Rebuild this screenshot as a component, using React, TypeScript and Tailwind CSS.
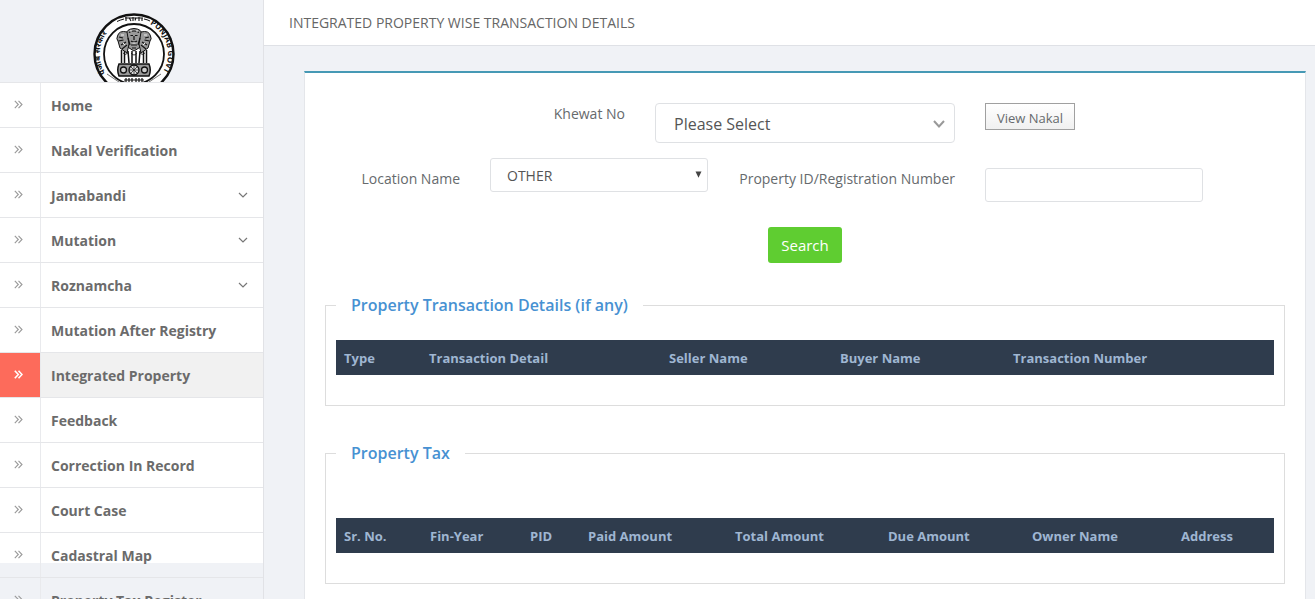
import { useState } from "react";

const menu = [
  { label: "Home" },
  { label: "Nakal Verification" },
  { label: "Jamabandi", children: true },
  { label: "Mutation", children: true },
  { label: "Roznamcha", children: true },
  { label: "Mutation After Registry" },
  { label: "Integrated Property", active: true },
  { label: "Feedback" },
  { label: "Correction In Record" },
  { label: "Court Case" },
  { label: "Cadastral Map" },
  { label: "Property Tax Register" },
];

const transactionColumns = [
  { label: "Type", width: "w-[85px]" },
  { label: "Transaction Detail", width: "w-[240px]" },
  { label: "Seller Name", width: "w-[171px]" },
  { label: "Buyer Name", width: "w-[173px]" },
  { label: "Transaction Number", width: "w-[269px]" },
];

const taxColumns = [
  { label: "Sr. No.", width: "w-[86px]" },
  { label: "Fin-Year", width: "w-[100px]" },
  { label: "PID", width: "w-[58px]" },
  { label: "Paid Amount", width: "w-[147px]" },
  { label: "Total Amount", width: "w-[153px]" },
  { label: "Due Amount", width: "w-[144px]" },
  { label: "Owner Name", width: "w-[149px]" },
  { label: "Address", width: "w-[101px]" },
];

function Emblem() {
  return (
    <svg className="h-[82px] w-[82px] shrink-0" viewBox="0 0 82 82" fill="none" stroke="#111">
      <defs>
        <path id="ring-left" d="M12.700 60 A34 34 0 0 1 27 10" />
        <path id="ring-right" d="M57 11 A34 34 0 0 1 66 64" />
      </defs>
      <circle cx="41" cy="41" r="39.500" fill="#fdfdfd" strokeWidth="2.400" />
      <circle cx="41" cy="41" r="30" fill="#fff" strokeWidth="1.800" />
      <g fill="#111" stroke="none" className="font-['Noto_Sans'] text-[8px] font-bold">
        <text><textPath href="#ring-left">पंजाब सरकार</textPath></text>
        <text><textPath href="#ring-right">PUNJAB GOVT</textPath></text>
      </g>
      <path d="M24 8.500 q3-1.500 7-2.500 M51 6 q3 .5 6 2" strokeWidth="1" />
      <path d="M32 5 h18 M33 4 v4 M36 4.500 l2 3.500 M40 4 v4 M43 4.500 l-1 3 M46 4 v4 M49 5 v3" strokeWidth="1.100" />

      {/* Lion heads and manes */}
      <g strokeWidth="1" fill="#999">
        <path d="M33 22 q0-6 8-6.500 q8 .5 8 6.500 l0 11 -8 5 -8-5z" />
        <path d="M34 19 q-8-2-9.500 4 q-1.500 3 .5 5 l2 7 7 5 2-9z" />
        <path d="M48 19 q8-2 9.500 4 q1.500 3-.5 5 l-2 7 -7 5-2-9z" />
      </g>
      <path d="M36 19.500 q5-3 10 0 M37.500 22.500 h2.500 M42 22.500 h2.500 M41 23 v4 M38 28 q3 2 6 0 M35 25 l2 7 M47 25 l-2 7 M38 32 h6 M39 35 h4 M26 24 l4 1 M25.500 28 l5-1 M28 32 l5-3 M29 36 l5-4 M56 24 l-4 1 M56.500 28 l-5-1 M54 32 l-5-3 M53 36 l-5-4" strokeWidth="1.200" />
      <path d="M37 18 h2 M43 18 h2 M28 22 h3 M51 22 h3 M39.500 30 h3 M30 30 l2 2 M52 30 l-2 2" stroke="#eee" strokeWidth="1" />

      {/* Chests and legs */}
      <path d="M28.500 37 v13 M31.500 38 v12 M35 38 l1 12 M39 38 v12 M43 38 v12 M47 38 l-1 12 M50.500 38 v12 M53.500 37 v13" strokeWidth="1.500" />
      <path d="M30 40 q2 3 5 0 M38 40 q3 4 6 0 M47 40 q2 3 5 0" strokeWidth=".8" />

      {/* Abacus with the wheel */}
      <path d="M26 51 h30 q2.500 6 0 12 h-30 q-2.500-6 0-12z" fill="#999" strokeWidth="1.500" />
      <circle cx="41" cy="57" r="5" fill="#ddd" strokeWidth="1.300" />
      <path d="M36 57 h10 M41 52 v10 M37.500 53.500 l7 7 M44.500 53.500 l-7 7" strokeWidth=".7" />
      <circle cx="30.500" cy="57" r="3" fill="#ccc" strokeWidth="1.300" />
      <circle cx="51.500" cy="57" r="3" fill="#ccc" strokeWidth="1.300" />
      <path d="M31 67 h20 M33 65 v4 M36 65 v4 M39 65 v4 M43 65 v4 M46 65 v4 M49 65 v4" strokeWidth="1.200" />
      <path d="M14 61 l12 8 M68 61 l-12 8" strokeWidth=".6" />
    </svg>
  );
}

function Sidebar() {
  return (
    <aside className="w-[264px] shrink-0 border-r border-[#e1e2e6]">
      <div className="flex h-[82px] justify-center overflow-hidden pt-[13px] pl-1">
        <Emblem />
      </div>

      {/* the white panel stops short of the list, which runs on past it */}
      <nav className="h-[calc(100vh-118px)] bg-white text-[14px] font-bold text-[#6b6b6b]">
        <ul>
          {menu.map((item) => (
            <li key={item.label} className="h-[45px] border-t border-[#e5e6e9]">
              <a href="#" className="flex h-full items-stretch">
                <span
                  className={
                    item.active
                      ? "flex w-[41px] items-center justify-center border-r border-[#e9eaed] bg-[#fd6b5b] pr-1 pb-[2px] text-white"
                      : "flex w-[41px] items-center justify-center border-r border-[#e9eaed] pr-1 pb-[2px] text-[#999]"
                  }
                >
                  <svg className="h-[9px] w-[9px]" viewBox="0 0 9 9" fill="none" stroke="currentColor" strokeWidth={item.active ? 1.6 : 1.1}>
                    <path d="M.8 .8 4.300 4.500 .8 8.200 M4.500 .8 8 4.500 4.500 8.200" />
                  </svg>
                </span>
                <span
                  className={
                    item.active
                      ? "flex flex-1 items-center justify-between bg-[#f1f1f1] pr-[15px] pl-[10px]"
                      : "flex flex-1 items-center justify-between pr-[15px] pl-[10px]"
                  }
                >
                  {item.label}
                  {item.children && (
                    <svg className="h-[6px] w-[10px]" viewBox="0 0 10 6" fill="none" stroke="#777" strokeWidth="1.200">
                      <path d="M1 1 5 5 9 1" />
                    </svg>
                  )}
                </span>
              </a>
            </li>
          ))}
        </ul>
      </nav>
    </aside>
  );
}

function HeaderTable({ columns }: { columns: { label: string; width: string }[] }) {
  return (
    <table className="w-full table-fixed bg-[#2f3c4d] text-left text-[13px] text-[#9fb6d2]">
      <thead>
        <tr className="h-[35px]">
          {columns.map((col) => (
            <th key={col.label} scope="col" className={`${col.width} px-2 pt-[2px] font-bold whitespace-nowrap`}>
              {col.label}
            </th>
          ))}
        </tr>
      </thead>
    </table>
  );
}

export default function App() {
  const [propertyId, setPropertyId] = useState("");

  return (
    <div className="flex h-screen overflow-hidden bg-[#f0f2f6] font-['Open_Sans','Noto_Sans',sans-serif] text-[14px] text-[#666a6d]">
      <Sidebar />

      {/* Main content */}
      <div className="flex min-w-0 flex-1 flex-col">
        <header className="flex h-[46px] shrink-0 items-center border-b border-[#dfe1e6] bg-white pl-[25px]">
          <h1 className="text-[14px] font-medium text-[#666]">INTEGRATED PROPERTY WISE TRANSACTION DETAILS</h1>
        </header>

        <main className="mt-[25px] mr-[9px] ml-10 flex-1 border-x border-t-2 border-[#e4e6ea] border-t-[#4699b5] bg-white px-5 pt-[30px]">
          <form onSubmit={(e) => e.preventDefault()}>
            <div className="grid grid-cols-12 items-start gap-x-[30px]">
              <label htmlFor="khewat" className="col-span-4 text-right leading-[22px]">
                Khewat No
              </label>
              <div className="relative col-span-4">
                <select id="khewat" className="h-10 w-full appearance-none rounded-[4px] border border-[#dfe1e4] bg-white px-[18px] pt-[2px] text-[16px] text-[#555]">
                  <option>Please Select</option>
                </select>
                <svg className="pointer-events-none absolute top-[17px] right-[10px] h-2 w-3" viewBox="0 0 12 8" fill="none" stroke="#999" strokeWidth="2">
                  <path d="M1 1 6 6.500 11 1" />
                </svg>
              </div>
              <div className="col-span-4">
                <button type="button" className="block h-[27px] border border-[#a0a0a0] bg-linear-to-b from-white to-[#f0f0f0] px-[11px] pt-[5px] text-[13px]">
                  View Nakal
                </button>
              </div>
            </div>

            <div className="mt-[15px] grid grid-cols-12 items-start gap-x-[30px]">
              <label htmlFor="location" className="col-span-2 pt-[10px] text-right leading-[22px] whitespace-nowrap">
                Location Name
              </label>
              <div className="relative col-span-3">
                <select id="location" className="h-[34px] w-full appearance-none rounded-[3px] border border-[#dfe1e4] bg-white px-4 text-[14px] text-[#555]">
                  <option>OTHER</option>
                </select>
                <svg className="pointer-events-none absolute top-[13px] right-[6px] h-[7px] w-[7px]" viewBox="0 0 7 7" fill="#444">
                  <path d="M.5 .5h6L3.500 6.800z" />
                </svg>
              </div>
              <label htmlFor="property-id" className="col-span-3 pt-[10px] text-right leading-[22px] whitespace-nowrap">
                Property ID/Registration Number
              </label>
              <div className="col-span-3 pt-[10px]">
                <input
                  id="property-id"
                  type="text"
                  value={propertyId}
                  onChange={(e) => setPropertyId(e.target.value)}
                  className="block h-[34px] w-full rounded-[3px] border border-[#dfe1e4] px-3"
                />
              </div>
            </div>

            <div className="mt-[25px] flex justify-center">
              <button type="submit" className="h-9 rounded-[3px] bg-[#5fcd31] px-[13px] text-[15px] text-white">
                Search
              </button>
            </div>
          </form>

          <fieldset className="mt-[30px] border border-[#ddd] px-[10px] pb-[30px]">
            <legend className="px-[15px] text-[16px] leading-[24px] font-semibold text-[#4791d2]">
              Property Transaction Details (if any)
            </legend>
            <div className="pt-[23px]">
              <HeaderTable columns={transactionColumns} />
            </div>
          </fieldset>

          <fieldset className="mt-[35px] border border-[#ddd] px-[10px] pb-[30px]">
            <legend className="px-[15px] text-[16px] leading-[24px] font-semibold text-[#4791d2]">Property Tax</legend>
            <div className="pt-[53px]">
              <HeaderTable columns={taxColumns} />
            </div>
          </fieldset>
        </main>
      </div>
    </div>
  );
}
